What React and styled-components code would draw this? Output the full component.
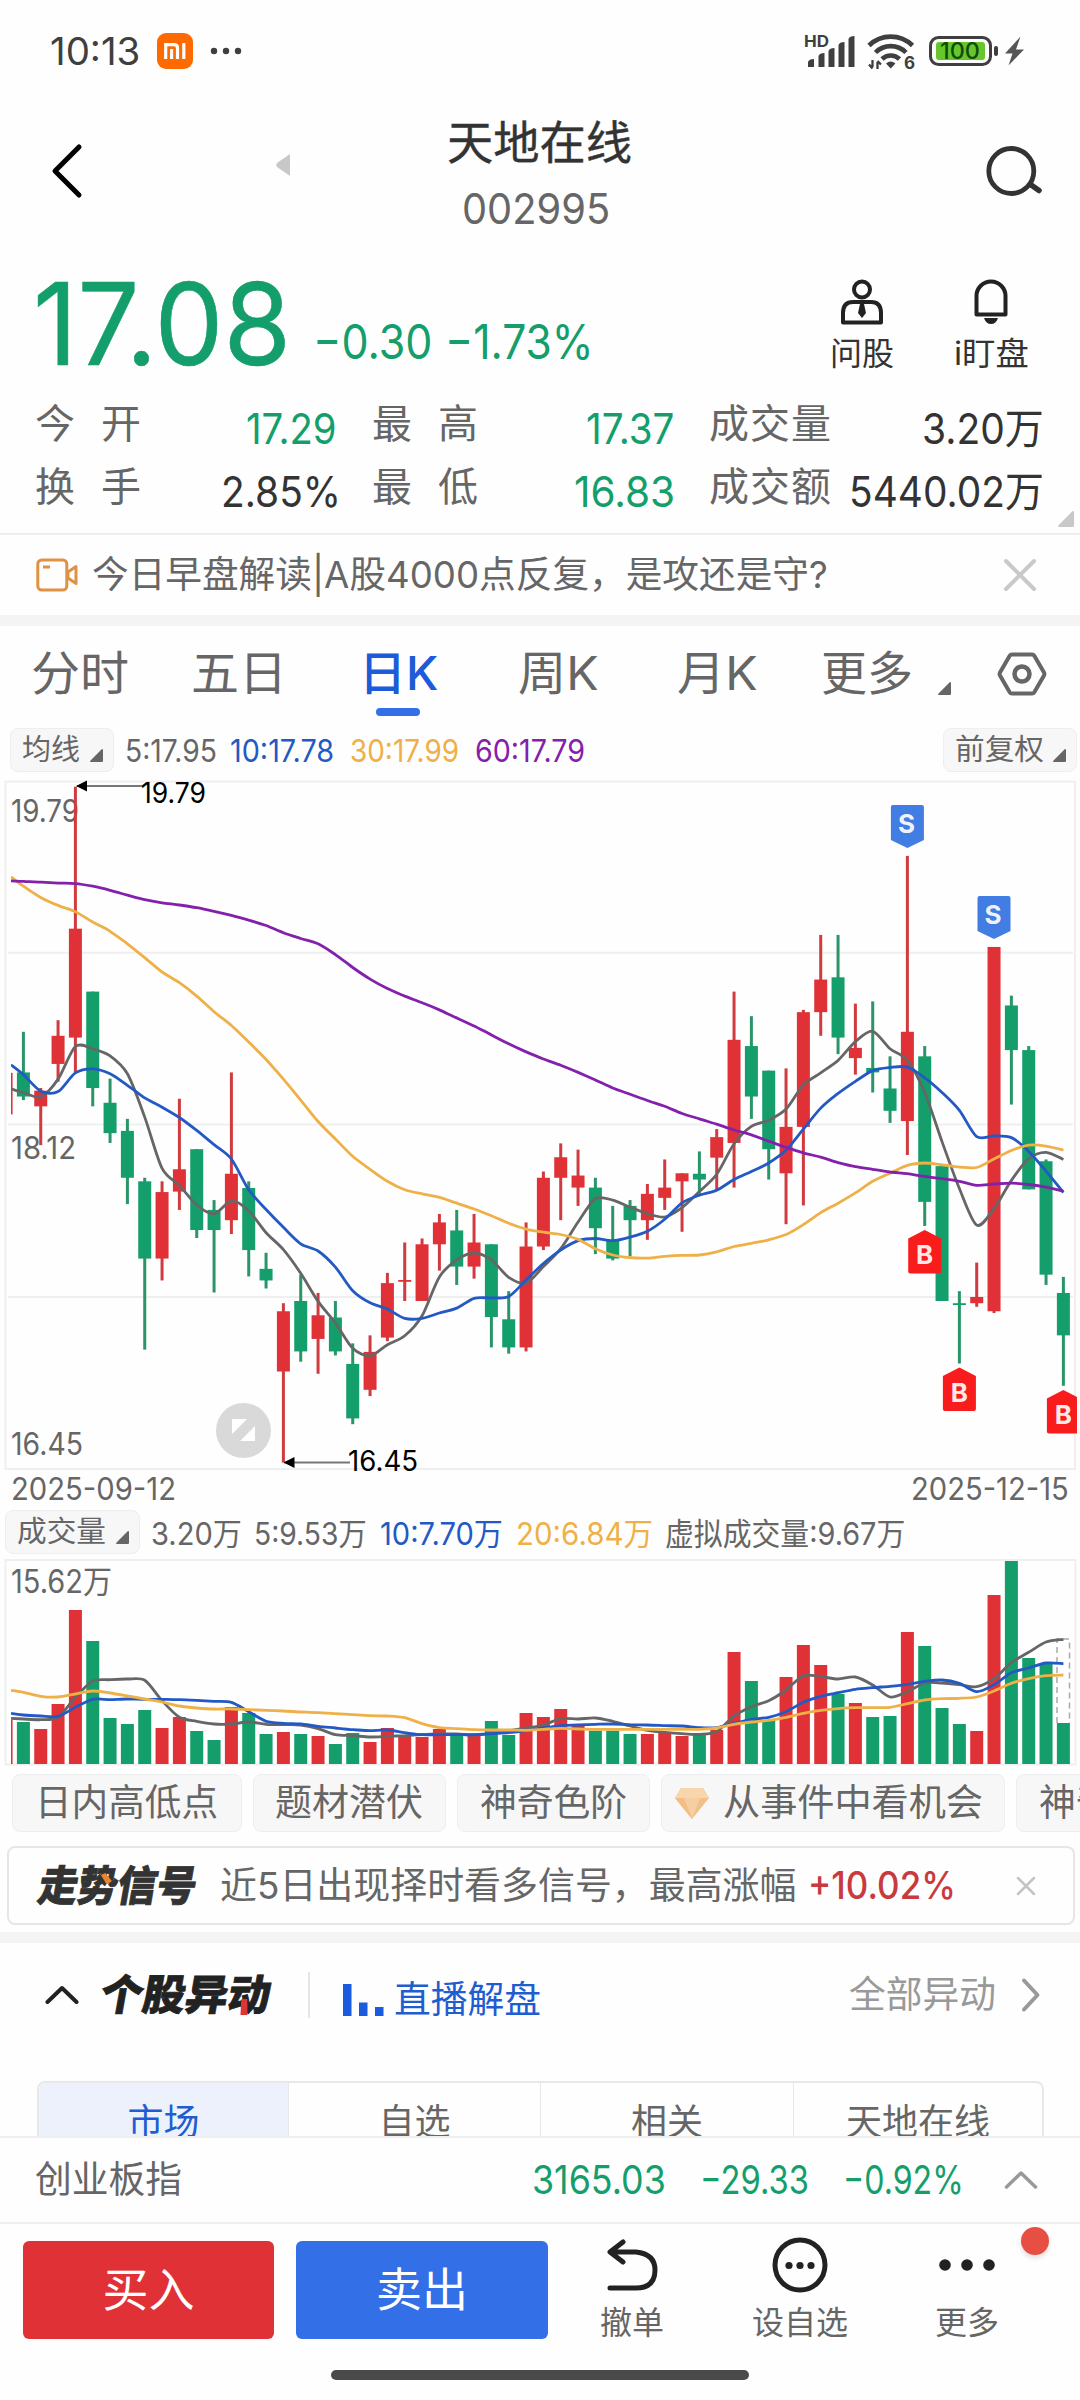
import React, { useLayoutEffect, useRef, useState } from "react";
import styled, { createGlobalStyle } from "styled-components";

const RED = "#e03236";
const GREEN = "#149e6b";
const UP = "#cf3b3f";
const DOWN = "#2a9568";
const GREY = "#666666";
const BLUE = "#2259c4";
const ORANGE = "#eeb047";
const PURPLE = "#8320ac";
const FONT = `Inter, "Noto Sans CJK SC", sans-serif`;

// first candle centre and distance between candles
const X0 = 23.4;
const STEP = 17.333;
const cx = (i) => X0 + STEP * i;

// [up, high, body top, body bottom, low]
const candles = [
  [1, 655, 656, 749, 749],
  [0, 564, 655, 709, 717], [1, 690, 696, 731, 818], [1, 538, 573, 636, 676], [1, 15, 333, 577, 655],
  [0, 474, 474, 690, 731], [0, 669, 723, 791, 813], [0, 759, 786, 891, 950], [0, 891, 899, 1072, 1276],
  [1, 899, 923, 1072, 1121], [1, 714, 872, 922, 963], [0, 827, 827, 1008, 1026], [0, 941, 963, 1008, 1148],
  [1, 655, 882, 986, 1017], [0, 899, 914, 1053, 1112], [0, 1059, 1095, 1121, 1139], [1, 1172, 1190, 1325, 1529],
  [0, 1108, 1167, 1280, 1303], [1, 1149, 1199, 1252, 1330], [0, 1167, 1204, 1280, 1289], [0, 1262, 1308, 1430, 1443],
  [1, 1244, 1281, 1366, 1380], [1, 1104, 1127, 1249, 1257], [1, 1036, 1120, 1124, 1167], [1, 1027, 1040, 1167, 1167],
  [1, 972, 991, 1040, 1099], [0, 963, 1009, 1090, 1131], [1, 972, 1036, 1090, 1117], [0, 1040, 1040, 1203, 1271],
  [0, 1145, 1208, 1271, 1285], [1, 991, 1045, 1271, 1280], [1, 877, 891, 1045, 1053], [1, 814, 845, 891, 986],
  [1, 828, 886, 913, 954], [0, 891, 913, 1004, 1062], [0, 954, 1031, 1072, 1076], [0, 941, 954, 986, 1067],
  [1, 905, 927, 986, 1030], [1, 850, 913, 936, 963], [1, 881, 881, 899, 1012], [0, 832, 882, 895, 927],
  [1, 782, 800, 846, 918], [1, 474, 582, 813, 913], [0, 529, 596, 709, 759], [0, 651, 651, 827, 895],
  [1, 646, 777, 881, 995], [1, 515, 520, 777, 953], [1, 347, 447, 520, 573], [0, 347, 442, 577, 614],
  [1, 501, 600, 623, 660], [0, 496, 645, 655, 700], [0, 619, 691, 741, 768], [1, 170, 564, 764, 840],
  [0, 596, 619, 945, 999], [0, 865, 865, 1167, 1167], [0, 1145, 1172, 1176, 1307], [1, 1081, 1158, 1172, 1180],
  [1, 374, 374, 1190, 1194], [0, 483, 505, 605, 727], [0, 596, 605, 917, 917], [0, 850, 854, 1108, 1131],
  [0, 1113, 1149, 1244, 1357],
];

const ma = {
  m5: [692, 700, 710, 670, 597, 602, 618, 658, 755, 870, 908, 952, 972, 943, 965, 1014, 1052, 1105, 1168, 1216, 1273, 1290, 1265, 1245, 1200, 1113, 1075, 1059, 1075, 1114, 1127, 1090, 1050, 990, 938, 941, 957, 971, 979, 958, 922, 883, 815, 776, 762, 737, 683, 656, 628, 586, 563, 602, 628, 700, 810, 915, 997, 960, 897, 848, 834, 850],
  m10: [638, 660, 697, 698, 656, 647, 658, 684, 712, 733, 756, 785, 817, 849, 918, 962, 1002, 1039, 1055, 1091, 1144, 1171, 1185, 1206, 1206, 1194, 1183, 1161, 1160, 1157, 1120, 1083, 1053, 1032, 1027, 1032, 1024, 1011, 984, 947, 930, 919, 895, 877, 858, 829, 782, 735, 702, 675, 651, 644, 643, 667, 700, 740, 799, 797, 801, 832, 876, 924],
  m30: [217, 238, 263, 281, 295, 318, 339, 367, 398, 430, 454, 484, 519, 550, 587, 626, 670, 717, 765, 804, 843, 872, 899, 918, 927, 935, 948, 961, 976, 993, 1006, 1013, 1018, 1029, 1050, 1064, 1070, 1071, 1067, 1065, 1064, 1057, 1045, 1038, 1030, 1018, 996, 969, 948, 925, 899, 881, 863, 858, 862, 867, 868, 849, 830, 818, 820, 829],
  m60: [226, 227, 229, 231, 232, 238, 247, 258, 268, 275, 280, 286, 294, 303, 314, 326, 342, 355, 367, 391, 420, 446, 467, 484, 499, 515, 533, 551, 571, 591, 609, 625, 639, 655, 672, 690, 704, 718, 731, 747, 759, 771, 784, 795, 809, 823, 835, 845, 857, 866, 872, 878, 882, 888, 893, 899, 908, 905, 903, 906, 912, 921],
};

const volumes = [
  779, 786, 807, 732, 450, 543, 774, 792, 750, 804, 771, 813, 840, 741, 759, 822, 816, 822, 828, 852, 819, 846, 804, 828, 831, 807, 819, 828, 783, 825, 759,
  771, 747, 798, 812, 812, 822, 822, 819, 828, 825, 810, 576, 663, 783, 651, 555, 615, 702, 729, 771, 768, 516, 558, 744, 792, 813, 405, 303, 594, 612, 789,
];

const volMa = {
  v5: [775, 777, 779, 772, 712, 663, 659, 657, 661, 722, 772, 784, 792, 792, 786, 793, 794, 795, 806, 824, 827, 831, 829, 827, 824, 822, 822, 825, 820, 812, 804, 795, 776, 777, 774, 784, 798, 811, 817, 821, 823, 815, 768, 740, 722, 690, 647, 650, 657, 651, 675, 711, 695, 669, 669, 674, 680, 656, 608, 577, 546, 538],
  v10: [760, 765, 768, 769, 742, 718, 719, 717, 718, 718, 719, 721, 724, 727, 755, 784, 790, 792, 799, 804, 809, 812, 810, 818, 824, 824, 824, 824, 821, 818, 812, 804, 797, 795, 793, 792, 794, 795, 797, 798, 803, 803, 790, 778, 772, 755, 727, 709, 698, 688, 683, 679, 673, 664, 660, 670, 695, 674, 638, 624, 609, 611],
  v20: [691, 697, 709, 711, 702, 693, 699, 708, 717, 726, 738, 744, 747, 747, 749, 751, 753, 756, 758, 761, 764, 767, 768, 773, 791, 803, 806, 809, 810, 810, 811, 808, 805, 807, 808, 808, 808, 808, 808, 808, 808, 804, 793, 786, 781, 772, 760, 751, 746, 743, 743, 742, 731, 720, 716, 715, 711, 693, 670, 656, 647, 645],
};

const py = (v) => v / 2.24;
const vy = (v) => v / 3 - 98;

function smooth(values, scale) {
  const pts = values.map((v, i) => [i === 0 ? 11 : cx(i - 1), scale(v)]);
  const at = (i) => pts[Math.max(0, Math.min(pts.length - 1, i))];
  let d = `M${pts[0][0]} ${pts[0][1].toFixed(1)}`;
  for (let i = 0; i < pts.length - 1; i++) {
    const [a, b, c, e] = [at(i - 1), at(i), at(i + 1), at(i + 2)];
    const n = [b[0] + (c[0] - a[0]) / 7, b[1] + (c[1] - a[1]) / 7, c[0] - (e[0] - b[0]) / 7, c[1] - (e[1] - b[1]) / 7, c[0], c[1]];
    d += `C${n.map((v) => v.toFixed(1)).join(" ")}`;
  }
  return d;
}

// condenses or widens one line of text to the given width
function Fit({ w, children }) {
  const ref = useRef();
  const [scale, setScale] = useState(1);
  useLayoutEffect(() => {
    setScale(w / ref.current.offsetWidth);
  }, [w, children]);
  return (
    <FitBox $w={w}>
      <FitText ref={ref} style={{ transform: `scaleX(${scale})` }}>{children}</FitText>
    </FitBox>
  );
}

function SvgText({ x, y, w, size, fill = GREY, children, weight = 400 }) {
  return (
    <text x={x} y={y + size * 0.364} fontSize={size} fill={fill} fontWeight={weight} textLength={w} lengthAdjust="spacingAndGlyphs">
      {children}
    </text>
  );
}

function Marker({ x, y, type }) {
  const sell = type === "S";
  const d = sell
    ? "M-16.500 2q0-2 2-2h29q2 0 2 2v33L0 43L-16.500 35z"
    : "M0 0L16.500 8.500v33q0 2-2 2h-29q-2 0-2-2v-33z";
  return (
    <g transform={`translate(${x} ${y})`}>
      <path d={d} fill={sell ? "#417de3" : "#f91c1c"} />
      <text x={sell ? -1 : 0} y={sell ? 28 : 34} fontSize="26" fontWeight="700" fill="#fff" fillOpacity="0.93" textAnchor="middle">
        {type}
      </text>
    </g>
  );
}

function PriceChart() {
  return (
    <Chart width="1080" height="690" viewBox="0 0 1080 690">
      <clipPath id="plot"><rect x="11" y="0" width="1066" height="690" /></clipPath>
      <rect x="5.500" y="1.500" width="1069.500" height="687.500" fill="none" stroke="#efefef" strokeWidth="2" />
      {[172.8, 344.6, 517].map((y) => (
        <line key={y} x1="8" x2="1073" y1={y} y2={y} stroke="#efefef" strokeWidth="2" />
      ))}
      <SvgText x={11} y={30.500} w={68} size={31}>19.79</SvgText>
      <SvgText x={11} y={367.500} w={65} size={31}>18.12</SvgText>
      <SvgText x={11} y={664} w={72} size={31}>16.45</SvgText>
      <g clipPath="url(#plot)">
        {candles.map(([up, high, top, bottom, low], i) => (
          <g key={i}>
            <rect x={cx(i - 1) - 1.5} y={py(high)} width="3" height={py(low - high)} fill={up ? UP : DOWN} />
            <rect x={cx(i - 1) - 6.5} y={py(top)} width="13" height={py(bottom - top)} fill={up ? RED : GREEN} />
          </g>
        ))}
        <g fill="none" strokeWidth="2.800">
          <path d={smooth(ma.m5, py)} stroke={GREY} />
          <path d={smooth(ma.m10, py)} stroke={BLUE} />
          <path d={smooth(ma.m30, py)} stroke={ORANGE} />
          <path d={smooth(ma.m60, py)} stroke={PURPLE} />
        </g>
        <Marker x={907.4} y={25} type="S" />
        <Marker x={994} y={116} type="S" />
        <Marker x={924.7} y={450} type="B" />
        <Marker x={959.4} y={587.500} type="B" />
        <Marker x={1063.4} y={610} type="B" />
      </g>
      <path d="M77 6H143M284 682.500H350" stroke="#777" strokeWidth="2" />
      <path d="M76 6l11-5.500v11zM283.500 682.500l11-5.500v11z" fill="#000" />
      <SvgText x={141} y={12.500} w={65} size={28} fill="#000">19.79</SvgText>
      <SvgText x={348} y={681} w={70} size={28} fill="#000">16.45</SvgText>
      <circle cx="243.500" cy="650.500" r="27.500" fill="#d9d9d9" />
      <path d="M232 639h15l-15 15zM255 661h-15l15-15z" fill="#fff" />
    </Chart>
  );
}

function VolumeChart() {
  return (
    <Chart width="1080" height="208" viewBox="0 0 1080 208">
      <clipPath id="vol"><rect x="11" y="0" width="1066" height="208" /></clipPath>
      <rect x="5.500" y="2" width="1070" height="204.500" fill="none" stroke="#efefef" strokeWidth="2" />
      <SvgText x={11} y={23} w={101} size={32}>15.62万</SvgText>
      <g clipPath="url(#vol)">
        {volumes.map((v, i) => (
          <rect key={i} x={cx(i - 1) - 6.5} y={vy(v)} width="13" height={206 - vy(v)} fill={candles[i][0] ? RED : GREEN} />
        ))}
        <path d="M1057 165V81H1069.500V165" fill="none" stroke="#aaa" strokeWidth="1.500" strokeDasharray="6 4" />
        <g fill="none" strokeWidth="2.800">
          <path d={smooth(volMa.v5, vy)} stroke={GREY} />
          <path d={smooth(volMa.v10, vy)} stroke={BLUE} />
          <path d={smooth(volMa.v20, vy)} stroke={ORANGE} />
        </g>
      </g>
    </Chart>
  );
}

function StatusIcons() {
  return (
    <svg width="230" height="50" viewBox="800 26 230 50" fill="#3f3f3f">
      <text x="804" y="47" fontSize="16" fontWeight="700" textLength="25" lengthAdjust="spacingAndGlyphs">HD</text>
      <path d="M808 66v-4q1-3 6-3v8h-6zM818.500 67V56q1-3 6-3v14zM828.500 67V51q1-3 6-3v19zM838.500 67V45q1-3 6-3v25zM848.500 67V39q1-3 6-3v31z" />
      <g fill="none" stroke="#3f3f3f" strokeWidth="4.600">
        <path d="M869 45.500a31 31 0 0 1 43.500 0" />
        <path d="M875.500 52.500a21.500 21.500 0 0 1 30.500 0" />
        <path d="M882 59a12.500 12.500 0 0 1 17.500 0" />
      </g>
      <path d="M886 63.500q4.700-4 9.400 0l-4.700 5z" />
      <path d="M872.500 60v7M869 64.500l3.500 4M877.500 69v-7M877.500 61l3.500 3.500" stroke="#3f3f3f" strokeWidth="2.300" fill="none" />
      <text x="904" y="69" fontSize="17" fontWeight="700">6</text>
      <rect x="930.500" y="37.500" width="60" height="27" rx="8" fill="none" stroke="#3f3f3f" strokeWidth="3" />
      <rect x="936" y="42" width="49" height="18" rx="3" fill="#67c62c" />
      <text x="940" y="59" fontSize="23" fontWeight="500" fill="#124a08" textLength="40" lengthAdjust="spacingAndGlyphs">100</text>
      <rect x="994" y="46" width="4" height="10" rx="2" />
      <path d="M1020.500 36.500L1005 53.500h7.500L1008.500 65.500L1024 49.500h-8z" fill="#555" />
    </svg>
  );
}

const Tri = ({ size = 13, color = GREY }) => (
  <svg width={size} height={size} viewBox="0 0 12 12">
    <path d="M11 0q1 0 1 1v10q0 1-1 1H1q-1.500 0-.5-1.500z" fill={color} />
  </svg>
);

const Chevron = ({ w, h, d, color, sw = 4 }) => (
  <svg width={w} height={h} viewBox={`0 0 ${w} ${h}`}>
    <path d={d} fill="none" stroke={color} strokeWidth={sw} strokeLinecap="round" strokeLinejoin="round" />
  </svg>
);

// label, value, value width, green, how far the value hangs out on the right
const stats = [
  ["今开", "17.29", 91, true, 0], ["最高", "17.37", 88, true, 0], ["成交量", "3.20万", 122, false, 0],
  ["换手", "2.85%", 120, false, 4], ["最低", "16.83", 101, true, 1], ["成交额", "5440.02万", 195, false, 0],
];
const periods = [["分时", 98, 0], ["五日", 96, 0], ["日K", 79, 1], ["周K", 81, 2], ["月K", 81, 2]];
const chips = [["日内高低点", 183, 230], ["题材潜伏", 148, 193], ["神奇色阶", 147, 193], ["从事件中看机会", 260, 344], ["神奇电波", 147, 193]];

export default function App() {
  return (
    <Page>
      <GlobalStyle />
      <StatusBar>
        <Clock><Fit w={90}>10:13</Fit></Clock>
        <MiBadge>
          <svg width="22" height="16" viewBox="0 0 22 16">
            <path d="M1.700 16V1.700H10Q13.500 1.700 13.500 5V16M7.600 6V16M19.800 0V16" fill="none" stroke="#fff" strokeWidth="3.200" />
          </svg>
        </MiBadge>
        <svg width="32" height="8" viewBox="0 0 32 8" fill="#3f3f3f">
          <circle cx="4" cy="4" r="3.200" /><circle cx="16" cy="4" r="3.200" /><circle cx="28" cy="4" r="3.200" />
        </svg>
        <StatusRight><StatusIcons /></StatusRight>
      </StatusBar>

      <Header>
        <Chevron w={34} h={58} d="M29 5L5 29L29 53" color="#000" sw={5} />
        <PrevStock>
          <svg width="14" height="22" viewBox="0 0 14 22"><path d="M14 0V22L1 13Q-.5 11 1 9z" fill="#c8c8c8" /></svg>
        </PrevStock>
        <Titles>
          <Title><Fit w={185}>天地在线</Fit></Title>
          <Code><Fit w={148}>002995</Fit></Code>
        </Titles>
        <svg width="60" height="56" viewBox="983 143 60 56" fill="none" stroke="#333">
          <circle cx="1011.300" cy="171" r="22.500" strokeWidth="4.800" />
          <path d="M1030.500 184.500L1039 190.500" strokeWidth="5.500" strokeLinecap="round" />
        </svg>
      </Header>

      <Quote>
        <Price><Fit w={258}>17.08</Fit></Price>
        <Change><Fit w={119}>−0.30</Fit><Fit w={149}>−1.73%</Fit></Change>
        <Action $w={80}>
          <svg width="44" height="46" viewBox="0 0 44 46" fill="none" stroke="#222" strokeWidth="4">
            <circle cx="22" cy="10.500" r="8" />
            <path d="M3 43.500V34q0-11 10-11h18q10 0 10 11v9.500z" strokeLinejoin="round" />
            <path d="M20 25h4l2 9-4 5-4-5z" fill="#222" stroke="none" />
          </svg>
          <ActionLabel>问股</ActionLabel>
        </Action>
        <Action $w={90}>
          <svg width="36" height="46" viewBox="0 0 36 46" fill="none" stroke="#222" strokeWidth="4">
            <path d="M3.500 35.500V17a14.500 14.500 0 0 1 29 0v18.500z" strokeLinejoin="round" />
            <path d="M11 39h14q-2 6-7 6t-7-6z" fill="#222" stroke="none" />
          </svg>
          <ActionLabel><Fit w={75}>i盯盘</Fit></ActionLabel>
        </Action>
      </Quote>

      <Stats>
        {stats.map(([label, value, w, green, out]) => (
          <Stat key={label}>
            <StatLabel $wide={label.length === 3}>
              {label.split("").map((c) => <span key={c}>{c}</span>)}
            </StatLabel>
            <StatValue $green={green} $out={out}><Fit w={w}>{value}</Fit></StatValue>
          </Stat>
        ))}
        <Corner><Tri size={16} color="#c8c8c8" /></Corner>
      </Stats>

      <News>
        <svg width="43" height="34" viewBox="0 0 43 34" fill="none" stroke="#df9144" strokeWidth="3">
          <rect x="1.800" y="2" width="29" height="30" rx="4" />
          <path d="M7 9h7" />
          <path d="M32 14l8-5.500v17l-8-5.500z" strokeLinejoin="round" />
        </svg>
        <NewsText><Fit w={736}>今日早盘解读|A股4000点反复，是攻还是守?</Fit></NewsText>
        <Chevron w={34} h={34} d="M3 3L31 31M31 3L3 31" color="#c9c9c9" />
      </News>
      <Band />

      <Tabs>
        {periods.map(([name, w, dx]) => (
          <Tab key={name} $on={name === "日K"} $dx={dx}>
            <Fit w={w}>{name}</Fit>
            {name === "日K" && <Underline />}
          </Tab>
        ))}
        <MoreTab><Fit w={92}>更多</Fit><Tri /></MoreTab>
        <svg width="50" height="48" viewBox="0 0 50 48" fill="none" stroke={GREY} strokeWidth="4">
          <path d="M15 4.500h20q1.500 0 2.300 1.300L47 22.500q.8 1.500 0 3L37.300 42.200q-.8 1.300-2.300 1.300H15q-1.500 0-2.300-1.300L3 25.500q-.8-1.500 0-3L12.700 5.800q.8-1.300 2.300-1.300z" />
          <circle cx="25" cy="24" r="7.500" strokeWidth="4.500" />
        </svg>
      </Tabs>

      <Averages>
        <Pill $w={104}><Fit w={58}>均线</Fit><Tri /></Pill>
        <Legend $color={GREY} $ml={11}><Fit w={92}>5:17.95</Fit></Legend>
        <Legend $color={BLUE} $ml={13}><Fit w={104}>10:17.78</Fit></Legend>
        <Legend $color={ORANGE} $ml={16}><Fit w={109}>30:17.99</Fit></Legend>
        <Legend $color={PURPLE} $ml={16}><Fit w={110}>60:17.79</Fit></Legend>
        <Pill $w={134} $right><Fit w={89}>前复权</Fit><Tri /></Pill>
      </Averages>

      <PriceChart />
      <Dates>
        <Fit w={165}>2025-09-12</Fit>
        <Fit w={158}>2025-12-15</Fit>
      </Dates>
      <VolumeInfo>
        <Pill $w={135} $pad={11}><Fit w={89}>成交量</Fit><Tri /></Pill>
        <Legend $color={GREY} $ml={11}><Fit w={91}>3.20万</Fit></Legend>
        <Legend $color={GREY} $ml={12}><Fit w={113}>5:9.53万</Fit></Legend>
        <Legend $color={BLUE} $ml={13}><Fit w={123}>10:7.70万</Fit></Legend>
        <Legend $color={ORANGE} $ml={13}><Fit w={137}>20:6.84万</Fit></Legend>
        <Legend $color={GREY} $ml={12}><Fit w={240}>虚拟成交量:9.67万</Fit></Legend>
      </VolumeInfo>
      <VolumeChart />

      <Chips>
        {chips.map(([name, w, box]) => (
          <Chip key={name} $w={box} $gem={name.length === 7}>
            {name.length === 7 && (
              <svg width="34" height="31" viewBox="0 0 34 31">
                <path d="M6 0h22l6 10L17 31L0 10z" fill="#f1c08a" />
                <path d="M6 0h22l6 10H0z" fill="#f7d6ae" />
                <path d="M9 10h16L17 31z" fill="#f5cfa2" />
                <path d="M9 10L17 31L0 10z" fill="#f3bd84" />
              </svg>
            )}
            <Fit w={w}>{name}</Fit>
          </Chip>
        ))}
      </Chips>

      <Signal>
        <Wordmark $color="#333">
          <Fit w={158}>走势信号</Fit>
          <Accent $x={60} $y={9}><svg width="12" height="11" viewBox="0 0 12 11"><path d="M0 2l4-2 8 8-3 3H7z" fill="#e8862a" /></svg></Accent>
        </Wordmark>
        <SignalText><Fit w={577}>近5日出现择时看多信号，最高涨幅</Fit></SignalText>
        <Gain><Fit w={148}>+10.02%</Fit></Gain>
        <Chevron w={20} h={20} d="M2 2L18 18M18 2L2 18" color="#c4c4c4" sw={2.5} />
      </Signal>
      <Band />

      <MovesHead>
        <Chevron w={34} h={20} d="M2.500 17L17 3L31.500 17" color="#222" />
        <Wordmark $color="#222" $ml={22}>
          <Fit w={170}>个股异动</Fit>
          <Accent $x={141} $y={26}><svg width="9" height="16" viewBox="0 0 9 16"><path d="M0 0h6l3 16H2z" fill="#dc3538" /></svg></Accent>
        </Wordmark>
        <Divider />
        <Live>
          <svg width="41" height="32" viewBox="0 0 41 32" fill="#1a5be0">
            <rect width="8.500" height="32" /><rect x="16" y="18.500" width="8.500" height="13.500" /><rect x="32" y="23" width="8.500" height="9" />
          </svg>
          <Fit w={147}>直播解盘</Fit>
        </Live>
        <AllMoves>
          <Fit w={147}>全部异动</Fit>
          <Chevron w={20} h={36} d="M3 3.500L16.500 18L3 32.500" color="#999" />
        </AllMoves>
      </MovesHead>
      <Segments>
        <Segment $on>市场</Segment>
        <Segment>自选</Segment>
        <Segment>相关</Segment>
        <Segment>天地在线</Segment>
      </Segments>

      <IndexBar>
        <Fit w={147}>创业板指</Fit>
        <IndexNums>
          <Fit w={134}>3165.03</Fit>
          <Fit w={109}>−29.33</Fit>
          <Fit w={121}>−0.92%</Fit>
        </IndexNums>
        <Chevron w={34} h={20} d="M2.500 17L17 3L31.500 17" color="#999" sw={3.5} />
      </IndexBar>

      <TradeBar>
        <Trade $bg={RED}>买入</Trade>
        <Trade $bg="#336fe6">卖出</Trade>
        <Tool $w={64} $ml={52}>
          <svg width="60" height="56" viewBox="0 0 60 56" fill="none" stroke="#222" strokeWidth="5" strokeLinecap="round" strokeLinejoin="round">
            <path d="M21 5L8 15L21 25M9 15H34Q53 17 53 33Q53 51 34 51H8" />
          </svg>
          撤单
        </Tool>
        <Tool $w={96} $ml={88}>
          <svg width="60" height="56" viewBox="0 0 60 56" fill="none" stroke="#222" strokeWidth="5">
            <circle cx="30" cy="28" r="25" />
            <g fill="#222" stroke="none"><circle cx="19" cy="28.500" r="3.600" /><circle cx="30" cy="28.500" r="3.600" /><circle cx="41" cy="28.500" r="3.600" /></g>
          </svg>
          设自选
        </Tool>
        <Tool $w={64} $ml={87}>
          <svg width="60" height="56" viewBox="0 0 60 56" fill="#222">
            <circle cx="8" cy="28" r="5.800" /><circle cx="30" cy="28" r="5.800" /><circle cx="52" cy="28" r="5.800" />
          </svg>
          更多
          <Dot />
        </Tool>
      </TradeBar>
      <HomeBar />
    </Page>
  );
}

const GlobalStyle = createGlobalStyle`
  body {
    margin: 0;
    background: #fff;
  }
  * {
    box-sizing: border-box;
  }
  svg {
    flex: none;
    display: block;
  }
`;

const Page = styled.div`
  width: 1080px;
  height: 2400px;
  overflow: hidden;
  display: flex;
  flex-direction: column;
  background: #fefefe;
  color: ${GREY};
  font-family: ${FONT};
  line-height: 1.2;
  white-space: nowrap;
  & > * {
    flex: none;
  }
`;

const FitBox = styled.span`
  display: block;
  flex: none;
  width: ${(p) => p.$w}px;
`;

const FitText = styled.span`
  display: inline-block;
  transform-origin: 0 50%;
`;

const Chart = styled.svg`
  font-family: ${FONT};
  overflow: visible;
`;

const StatusBar = styled.div`
  height: 102px;
  display: flex;
  align-items: center;
  padding-left: 50px;
`;

const Clock = styled.div`
  font-size: 38px;
  line-height: 44px;
  color: #3f3f3f;
`;

const MiBadge = styled.div`
  width: 36px;
  height: 36px;
  margin: 0 17px 0 17px;
  border-radius: 9px;
  background: #ff6a00;
  display: flex;
  align-items: center;
  justify-content: center;
`;

const StatusRight = styled.div`
  margin-left: auto;
  margin-right: 50px;
`;

const Header = styled.div`
  height: 142px;
  display: flex;
  align-items: center;
  padding: 0 37px 0 50px;
  & > svg {
    margin-bottom: 4px;
  }
`;

const PrevStock = styled.div`
  margin-left: 192px;
  margin-bottom: 16px;
`;

const Titles = styled.div`
  width: 185px;
  margin-left: 157px;
  margin-right: auto;
  margin-bottom: 3px;
  display: flex;
  flex-direction: column;
  align-items: center;
`;

const Title = styled.div`
  font-size: 46px;
  line-height: 68px;
  color: #333;
  padding-top: 7px;
  -webkit-text-stroke: 0.4px #333;
`;

const Code = styled.div`
  font-size: 42.5px;
  line-height: 66px;
  margin-right: 7px;
`;

const Quote = styled.div`
  height: 146px;
  display: flex;
  padding-left: 33px;
  color: ${GREEN};
`;

const Price = styled.div`
  font-size: 114px;
  line-height: 120px;
  margin-top: 20px;
  -webkit-text-stroke: 0.6px ${GREEN};
`;

const Change = styled.div`
  display: flex;
  gap: 13px;
  font-size: 48px;
  line-height: 60px;
  margin: 68px 0 0 22px;
  width: 509px;
`;

const Action = styled.div`
  width: ${(p) => p.$w}px;
  margin-right: 44px;
  padding-top: 35px;
  display: flex;
  flex-direction: column;
  align-items: center;
`;

const ActionLabel = styled.div`
  font-size: 32px;
  line-height: 40px;
  margin-top: 9px;
  color: #333;
`;

const Stats = styled.div`
  position: relative;
  height: 145px;
  padding: 2px 0 0 35px;
  display: grid;
  grid-template-columns: 302px 302px 335px;
  grid-template-rows: 63px 63px;
  column-gap: 35px;
  border-bottom: 2px solid #eee;
`;

const Stat = styled.div`
  display: flex;
  justify-content: space-between;
  align-items: center;
`;

const StatLabel = styled.div`
  width: ${(p) => (p.$wide ? 122 : 106)}px;
  display: flex;
  justify-content: space-between;
  font-size: 40px;
`;

const StatValue = styled.div`
  padding-top: 10px;
  margin-right: -${(p) => p.$out}px;
  font-size: 42.5px;
  color: ${(p) => (p.$green ? GREEN : "#333")};
`;

const Corner = styled.div`
  position: absolute;
  right: 6px;
  bottom: 6px;
`;

const News = styled.div`
  height: 80px;
  display: flex;
  align-items: center;
  padding: 0 43px 0 36px;
  & > svg:last-child {
    margin-left: auto;
  }
`;

const NewsText = styled.div`
  margin-left: 13px;
  font-size: 37px;
  line-height: 50px;
`;

const Band = styled.div`
  height: 11px;
  background: #f4f4f4;
`;

const Tabs = styled.div`
  height: 98px;
  display: flex;
`;

const Tab = styled.div`
  position: relative;
  width: 159px;
  padding-left: ${(p) => p.$dx * 2}px;
  display: flex;
  justify-content: center;
  font-size: 47px;
  line-height: 94px;
  color: ${(p) => (p.$on ? "#1d5bd8" : GREY)};
  font-weight: ${(p) => (p.$on ? 500 : 400)};
`;

const Underline = styled.div`
  position: absolute;
  left: 58px;
  top: 82px;
  width: 44px;
  height: 8px;
  border-radius: 4px;
  background: #3370e6;
`;

const MoreTab = styled.div`
  width: 202px;
  padding-left: 26px;
  display: flex;
  font-size: 47px;
  line-height: 94px;
  & > svg {
    margin: 56px 0 0 25px;
  }
  & + svg {
    margin-top: 24px;
  }
`;

const Averages = styled.div`
  height: 56px;
  display: flex;
  align-items: flex-start;
  padding: 4px 3px 0 10px;
  font-size: 31px;
  line-height: 45px;
`;

const Pill = styled.div`
  width: ${(p) => p.$w}px;
  height: 44px;
  margin-left: ${(p) => (p.$right ? "auto" : 0)};
  padding: 0 10px 0 ${(p) => p.$pad || 11}px;
  display: flex;
  align-items: center;
  justify-content: space-between;
  background: #f7f7f7;
  border: 1px solid #eee;
  border-radius: 8px;
  font-size: 29px;
  line-height: 42px;
  & > svg {
    margin-top: 11px;
  }
`;

const Legend = styled.div`
  margin-left: ${(p) => p.$ml}px;
  color: ${(p) => p.$color};
`;

const Dates = styled.div`
  height: 38px;
  padding: 0 11px;
  display: flex;
  justify-content: space-between;
  font-size: 31px;
  line-height: 38px;
`;

const VolumeInfo = styled.div`
  height: 50px;
  display: flex;
  align-items: flex-start;
  padding: 2px 0 0 5px;
  font-size: 31px;
  line-height: 47px;
`;

const Chips = styled.div`
  height: 66px;
  padding: 8px 0 0 12px;
  display: flex;
  gap: 11px;
  overflow: hidden;
`;

const Chip = styled.div`
  flex: none;
  width: ${(p) => p.$w}px;
  height: 58px;
  padding-right: ${(p) => (p.$gem ? 8 : 1)}px;
  display: flex;
  align-items: center;
  justify-content: center;
  gap: 14px;
  background: #f7f7f7;
  border: 1px solid #eee;
  border-radius: 8px;
  font-size: 37px;
  line-height: 54px;
`;

const Signal = styled.div`
  height: 79px;
  margin: 14px 5px 7px 7px;
  padding: 0 37px 0 30px;
  display: flex;
  align-items: center;
  border: 2px solid #e6e6e6;
  border-radius: 8px;
  & > svg {
    margin-left: auto;
  }
`;

const Wordmark = styled.div`
  position: relative;
  margin-left: ${(p) => p.$ml || 0}px;
  font-size: 42px;
  line-height: 44px;
  font-weight: 900;
  color: ${(p) => p.$color};
  -webkit-text-stroke: 0.8px ${(p) => p.$color};
  transform: skewX(-10deg);
`;

const Accent = styled.div`
  position: absolute;
  left: ${(p) => p.$x}px;
  top: ${(p) => p.$y}px;
`;

const SignalText = styled.div`
  margin-left: 23px;
  font-size: 37px;
  line-height: 50px;
`;

const Gain = styled.div`
  margin-left: 11px;
  font-size: 38px;
  font-weight: 500;
  color: #c93a3e;
`;

const MovesHead = styled.div`
  height: 138px;
  padding: 0 39px 34px 45px;
  display: flex;
  align-items: center;
`;

const Divider = styled.div`
  width: 2px;
  height: 46px;
  margin: 0 33px 0 37px;
  background: #e6e6e6;
`;

const Live = styled.div`
  display: flex;
  align-items: center;
  gap: 10px;
  padding-top: 10px;
  font-size: 37px;
  line-height: 44px;
  color: #1f5dd0;
`;

const AllMoves = styled.div`
  margin-left: auto;
  display: flex;
  align-items: center;
  gap: 25px;
  font-size: 37px;
  color: #999;
`;

const Segments = styled.div`
  height: 55px;
  margin: 0 36px 0 37px;
  overflow: hidden;
  display: grid;
  grid-template-columns: 249px 252px 253px 1fr;
  border: 2px solid #e8e8e8;
  border-bottom: 0;
  border-radius: 8px 8px 0 0;
`;

const Segment = styled.div`
  text-align: center;
  font-size: 36px;
  line-height: 79px;
  color: ${(p) => (p.$on ? "#1f5dd0" : GREY)};
  background: ${(p) => (p.$on ? "#ecf1fc" : "transparent")};
  & + & {
    border-left: 1px solid #e8e8e8;
  }
`;

const IndexBar = styled.div`
  height: 88px;
  display: flex;
  align-items: center;
  padding: 0 42px 0 35px;
  border-top: 2px solid #efefef;
  border-bottom: 2px solid #efefef;
  background: #fefefe;
  font-size: 37px;
`;

const IndexNums = styled.div`
  margin-left: auto;
  margin-right: 40px;
  display: flex;
  gap: 34px;
  font-size: 39px;
  color: ${GREEN};
`;

const TradeBar = styled.div`
  height: 145px;
  padding: 17px 0 0 23px;
  display: flex;
`;

const Trade = styled.div`
  width: 251px;
  height: 98px;
  margin-right: 22px;
  border-radius: 6px;
  background: ${(p) => p.$bg};
  color: #fff;
  text-align: center;
  font-size: 46px;
  line-height: 97px;
  & + & {
    width: 252px;
    margin-right: 0;
  }
`;

const Tool = styled.div`
  position: relative;
  width: ${(p) => p.$w}px;
  margin-left: ${(p) => p.$ml}px;
  margin-top: -4px;
  display: flex;
  flex-direction: column;
  align-items: center;
  font-size: 32px;
  line-height: 59px;
`;

const Dot = styled.div`
  position: absolute;
  left: 86px;
  top: -10px;
  width: 28px;
  height: 28px;
  border-radius: 50%;
  background: #e84f43;
  box-shadow: 0 3px 5px rgba(0, 0, 0, 0.12);
`;

const HomeBar = styled.div`
  width: 418px;
  height: 10px;
  margin: 1px auto 0;
  border-radius: 5px;
  background: #4a4a4a;
`;
